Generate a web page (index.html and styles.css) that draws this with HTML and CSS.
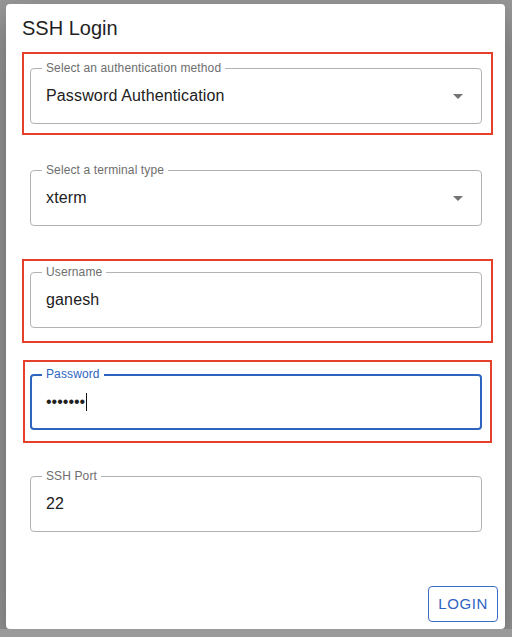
FILE: index.html
```html
<!DOCTYPE html>
<html lang="en">
<head>
<meta charset="utf-8">
<title>SSH Login</title>
<link rel="stylesheet" href="styles.css">
</head>
<body>
<div class="dialog">
  <h2 class="title">SSH Login</h2>
  <div class="form">
    <div class="field marked mark-a">
      <span class="label">Select an authentication method</span>
      <span class="value">Password Authentication</span>
      <span class="arrow"></span>
    </div>
    <div class="field">
      <span class="label">Select a terminal type</span>
      <span class="value">xterm</span>
      <span class="arrow"></span>
    </div>
    <div class="field marked mark-b">
      <span class="label">Username</span>
      <span class="value">ganesh</span>
    </div>
    <div class="field focused marked mark-c">
      <span class="label">Password</span>
      <span class="value dots">&bull;&bull;&bull;&bull;&bull;&bull;&bull;</span><span class="caret"></span>
    </div>
    <div class="field">
      <span class="label">SSH Port</span>
      <span class="value">22</span>
    </div>
  </div>
  <div class="actions">
    <button class="btn">LOGIN</button>
  </div>
</div>
</body>
</html>
```
FILE: styles.css
```css
html, body {
  margin: 0;
  padding: 0;
  background: #9a9a9a;
  font-family: "Liberation Sans", Arial, sans-serif;
}
.dialog {
  margin: 4px 0 0 6px;
  width: 499px;
  height: 625px;
  background: #fff;
  border-radius: 4px;
  box-shadow: 0 11px 15px -7px rgba(0,0,0,0.2), 0 24px 38px 3px rgba(0,0,0,0.14), 0 9px 46px 8px rgba(0,0,0,0.12);
  display: flex;
  flex-direction: column;
  box-sizing: border-box;
}
.title {
  margin: 0;
  padding: 12px 16px 0;
  font-size: 20px;
  line-height: 24px;
  font-weight: 400;
  color: #1f1f1f;
}
.form {
  margin-top: 28px;
  padding: 0 23px 0 24px;
  display: flex;
  flex-direction: column;
  gap: 46px;
}
.field {
  position: relative;
  height: 56px;
  box-sizing: border-box;
  border: 1px solid #b3b3b3;
  border-radius: 4px;
  display: flex;
  align-items: center;
  padding: 0 15px;
}
.field.focused {
  border: 2px solid #2e64bf;
  padding: 0 14px;
}
.label {
  position: absolute;
  top: -9px;
  left: 11px;
  padding: 0 4px;
  background: #fff;
  font-size: 12px;
  line-height: 16px;
  letter-spacing: 0.12px;
  color: #6e6e6e;
  white-space: nowrap;
}
.focused .label {
  top: -10px;
  left: 10px;
  color: #2e64bf;
}
.value {
  font-size: 16px;
  color: #212121;
  line-height: 20px;
  letter-spacing: 0.15px;
}
.dots {
  letter-spacing: 0;
}
.caret {
  display: inline-block;
  width: 1px;
  height: 18px;
  background: #111;
  margin-left: 1px;
}
.arrow {
  position: absolute;
  right: 18px;
  top: 25px;
  width: 0;
  height: 0;
  border-left: 5px solid transparent;
  border-right: 5px solid transparent;
  border-top: 5px solid #737373;
}
.marked::after {
  content: "";
  position: absolute;
  left: -9px;
  right: -12px;
  border: 2px solid #e5402b;
  pointer-events: none;
}
.mark-a::after { top: -17px; bottom: -12px; }
.mark-b::after { top: -14px; bottom: -16px; }
.mark-c::after { top: -16px; bottom: -15px; }
.actions {
  margin-top: auto;
  display: flex;
  justify-content: flex-end;
  padding: 0 7px 7px 0;
}
.btn {
  height: 36px;
  padding: 0 9px;
  background: #fff;
  border: 1px solid #3c6fc4;
  border-radius: 4px;
  color: #2e64bf;
  font-family: "Liberation Sans", Arial, sans-serif;
  font-size: 15px;
  letter-spacing: 0.6px;
  line-height: 34px;
}
```
